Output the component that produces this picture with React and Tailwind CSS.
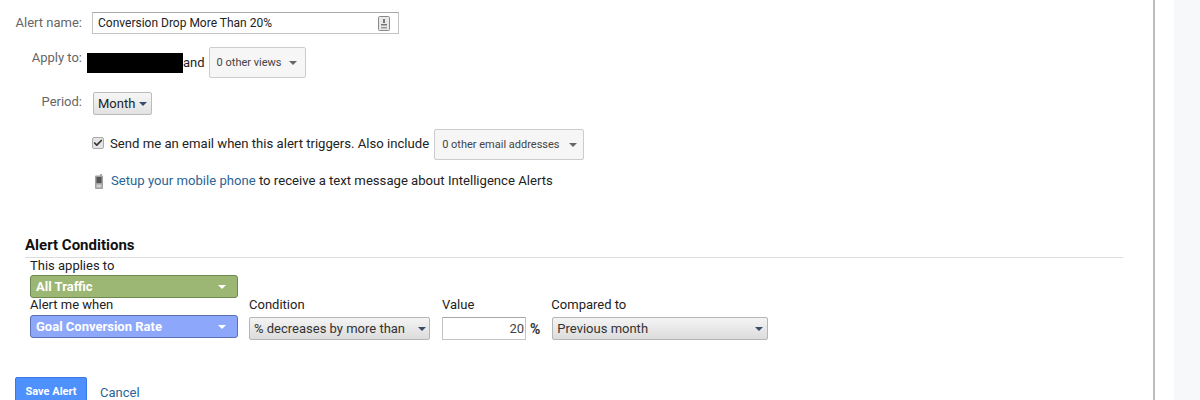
import { Check } from 'lucide-react'

const Caret = ({ className = 'border-t-[#555]' }) => (
  <span className={`h-0 w-0 border-x-[4px] border-t-[4px] border-x-transparent ${className}`} />
)

const Label = ({ children }) => (
  <div className="w-[82px] shrink-0 text-right text-[13px] leading-[16px] text-[#666]">{children}</div>
)

const GreyMenu = ({ children, className }) => (
  <div className={`flex items-center justify-between rounded-[2px] border border-[#ccc] bg-[#f6f6f6] text-[11px] text-[#444] ${className}`}>
    <span className="mt-[1px]">{children}</span>
    <Caret className="border-t-[#666]" />
  </div>
)

const ColorMenu = ({ children, className }) => (
  <div className={`flex h-[23px] w-[208px] items-center justify-between rounded-[3px] border pl-[5px] pr-[11px] text-[13px] font-bold text-white ${className}`}>
    <span>{children}</span>
    <Caret className="border-t-white" />
  </div>
)

const Select = ({ children, className }) => (
  <div className={`flex h-[23px] items-center justify-between rounded-[2px] border border-[#b5b5b5] bg-gradient-to-b from-[#f4f4f4] to-[#dcdcdc] pl-[4px] pr-[3px] text-[13px] text-[#333] ${className}`}>
    <span>{children}</span>
    <Caret className="border-t-[#3a4a6b]" />
  </div>
)

const PhoneIcon = () => (
  <svg width="8" height="15" viewBox="0 0 8 15" className="shrink-0">
    <rect x="0" y="1.5" width="8" height="13.5" rx="1" fill="#a0a0a0" />
    <rect x="5" y="0" width="2" height="2" fill="#aaa" />
    <rect x="1.5" y="3" width="5" height="6" fill="#555" />
    <rect x="1.5" y="10.5" width="5" height="3" fill="#d0d0d0" />
  </svg>
)

export default function App() {
  return (
    <div className="flex h-[400px] w-[1200px] overflow-hidden bg-white font-['Roboto',sans-serif] text-[#222]">
      <div className="w-[1153px] shrink-0 pt-[12px]">
        {/* Alert name */}
        <div className="flex items-center">
          <Label>Alert name:</Label>
          <div className="ml-[10px] flex h-[22px] w-[307px] items-center justify-between border border-[#c4c4c4] border-t-[#a8a8a8] pl-[5px] pr-[8px] text-[12px] text-[#222]">
            <span>Conversion Drop More Than 20%</span>
            <svg width="12" height="15" viewBox="0 0 12 15">
              <rect x="0.5" y="0.5" width="11" height="14" rx="1" fill="#e8e8e8" stroke="#8a8a8a" />
              <rect x="5" y="3" width="2" height="4" fill="#777" />
              <rect x="3" y="8" width="6" height="1.5" fill="#777" />
              <rect x="3" y="11" width="6" height="1.5" fill="#999" />
            </svg>
          </div>
        </div>

        {/* Apply to */}
        <div className="mt-[13px] flex h-[31px] items-center">
          <div className="-mt-[9px]"><Label>Apply to:</Label></div>
          <div className="ml-[5px] h-[20px] w-[96px] bg-black" />
          <span className="text-[13px]">and</span>
          <GreyMenu className="ml-[4px] h-[31px] w-[97px] pl-[7px] pr-[8px]">0 other views</GreyMenu>
        </div>

        {/* Period */}
        <div className="mt-[14px] flex items-center">
          <div className="-mt-[4px]"><Label>Period:</Label></div>
          <div className="ml-[11px] flex h-[23px] w-[59px] items-center gap-[4px] rounded-[2px] border border-[#bbb] bg-gradient-to-b from-[#f6f6f6] to-[#e2e2e2] pl-[4px] text-[13px] text-[#222]">
            <span>Month</span>
            <Caret className="border-t-[#3a4a6b]" />
          </div>
        </div>

        {/* Email */}
        <div className="ml-[92px] mt-[14px] flex h-[31px] items-center">
          <div className="-mt-[4px] flex h-[12px] w-[12px] items-center justify-center rounded-[2px] border border-[#aaa] bg-[#e4e4e4]">
            <Check size={10} strokeWidth={4} className="text-[#333]" />
          </div>
          <span className="-mt-[1px] ml-[6px] text-[13.13px]">Send me an email when this alert triggers. Also include</span>
          <GreyMenu className="ml-[5px] h-[31px] w-[150px] pl-[7px] pr-[6px]">0 other email addresses</GreyMenu>
        </div>

        {/* Phone */}
        <div className="ml-[95px] mt-[12px] flex h-[18px] items-center">
          <PhoneIcon />
          <span className="ml-[8px] -mt-[1px] text-[13.13px]">
            <span className="text-[#2a6496]">Setup your mobile phone</span> to receive a text message about Intelligence Alerts
          </span>
        </div>

        {/* Alert Conditions */}
        <div className="ml-[25px] mt-[46px] w-[1098px] border-b border-[#ddd] pb-[3px] text-[15px] font-bold leading-[18px] text-[#111]">
          Alert Conditions
        </div>

        <div className="ml-[30px] text-[13px] leading-[16px] text-[#222]">
          <div>This applies to</div>
          <ColorMenu className="mt-[1px] border-[#6f8a4f] bg-[#9cb673]">All Traffic</ColorMenu>

          <div className="flex">
            <div>
              <div className="-mt-[1px]">Alert me when</div>
              <ColorMenu className="mt-[2px] border-[#5a70b0] bg-[#8da8fa]">Goal Conversion Rate</ColorMenu>
            </div>
            <div className="ml-[11px]">
              <div className="-mt-[1px]">Condition</div>
              <Select className="mt-[4px] w-[181px]">% decreases by more than</Select>
            </div>
            <div className="ml-[12px]">
              <div className="-mt-[1px]">Value</div>
              <div className="mt-[4px] flex items-center">
                <div className="flex h-[23px] w-[84px] items-center justify-end border border-[#c4c4c4] border-t-[#a8a8a8] pr-[1px] text-[13px] text-[#444]">20</div>
                <span className="ml-[4px] text-[14px] font-bold text-[#333]">%</span>
              </div>
            </div>
            <div className="ml-[11px]">
              <div className="-mt-[1px]">Compared to</div>
              <Select className="ml-[1px] mt-[4px] w-[216px] pr-[4px]">Previous month</Select>
            </div>
          </div>
        </div>

        {/* Actions */}
        <div className="ml-[15px] mt-[37px] flex items-start">
          <div className="flex h-[30px] w-[72px] items-center justify-center rounded-[2px] border border-[#3b78e7] bg-[#4d90fe] text-[11px] font-bold text-white">
            Save Alert
          </div>
          <span className="ml-[13px] mt-[6px] text-[13px] text-[#2a6496]">Cancel</span>
        </div>
      </div>

      <div className="w-[2px] shrink-0 bg-[#bdbdbd]" />
      <div className="w-[19px] shrink-0" />
      <div className="flex-1 bg-[#f7f8fa]" />
    </div>
  )
}
